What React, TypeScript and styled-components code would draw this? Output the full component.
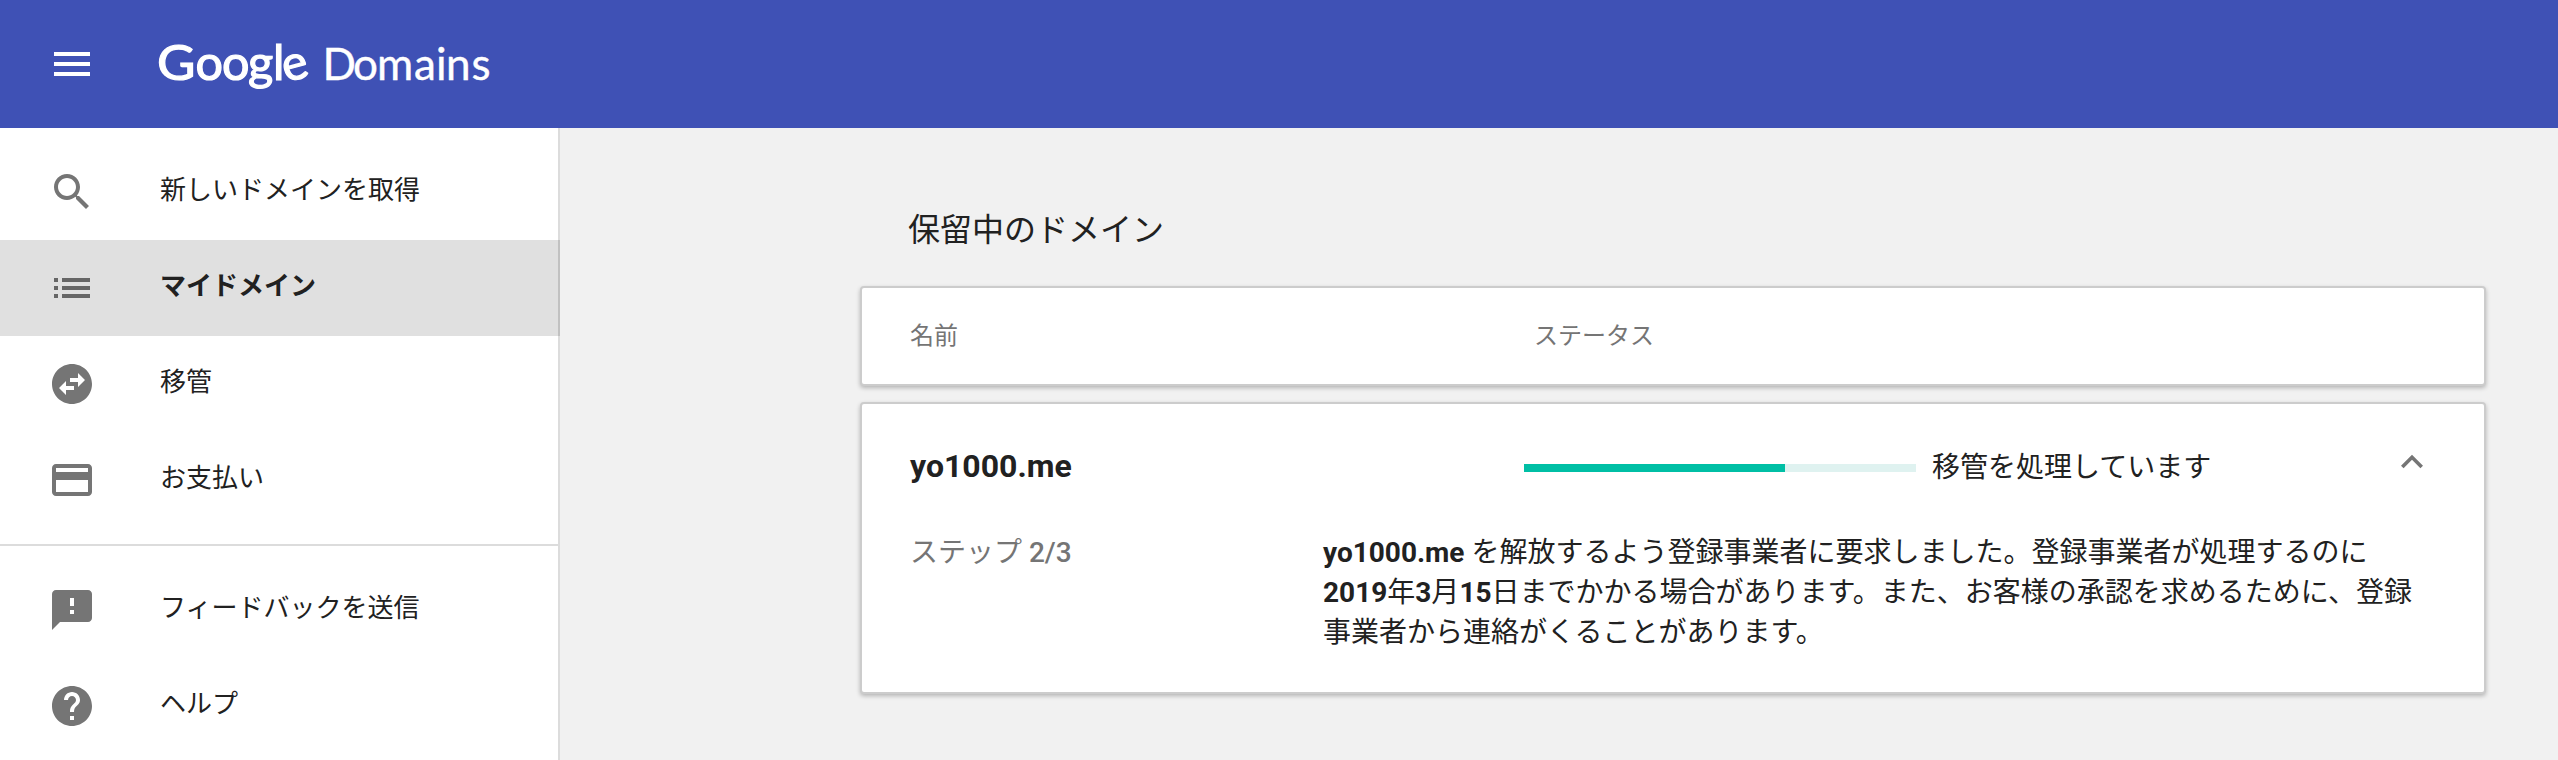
import React from 'react';
import styled, { createGlobalStyle } from 'styled-components';

const GlobalStyle = createGlobalStyle`
  * { box-sizing: border-box; }
  body {
    margin: 0;
    background: #f1f1f1;
    color: #212121;
    font-family: Roboto, 'Noto Sans CJK JP', sans-serif;
  }
`;

const Page = styled.div`
  display: flex;
  flex-direction: column;
  height: 760px;
  overflow: hidden;
`;

const Header = styled.header`
  display: flex;
  align-items: center;
  flex: none;
  height: 128px;
  padding-left: 48px;
  background: #3f51b5;
  color: #fff;
`;

const Logo = styled.svg`
  display: block;
  width: 340px;
  height: 128px;
  margin-left: 60px;
  fill: #fff;
  font-family: Lato, sans-serif;
`;

const Body = styled.div`
  display: flex;
  flex: 1;
  min-height: 0;
`;

const Sidebar = styled.nav`
  flex: none;
  width: 560px;
  padding-top: 16px;
  background: linear-gradient(#dcdcdc, #dcdcdc) right / 2px 100% no-repeat #fff;
`;

const NavItem = styled.a<{ $active?: boolean }>`
  display: flex;
  align-items: center;
  height: 96px;
  padding-left: 48px;
  border-right: 2px solid ${(p) => (p.$active ? '#c1c1c1' : 'transparent')};
  background: ${(p) => (p.$active ? '#e0e0e0' : 'transparent')};
  background-clip: padding-box;
  color: ${(p) => (p.$active ? '#666' : '#757575')};
  font-weight: ${(p) => (p.$active ? 700 : 400)};
`;

const NavLabel = styled.span`
  margin: 0 0 4px 64px;
  color: #212121;
  font-size: 26px;
  line-height: 40px;
`;

const Divider = styled.hr`
  width: 558px;
  height: 2px;
  margin: 16px 0;
  border: 0;
  background: #dcdcdc;
`;

const Icon = styled.svg<{ $size: number }>`
  flex: none;
  display: block;
  width: ${(p) => p.$size}px;
  height: ${(p) => p.$size}px;
  fill: currentColor;
`;

const Main = styled.main`
  flex: 1;
  padding: 78px 72px 0 300px;
`;

const Title = styled.h1`
  margin: 0 0 32px 48px;
  font-size: 32px;
  font-weight: 400;
  line-height: 48px;
`;

const Card = styled.section`
  margin-bottom: 16px;
  border: 2px solid #ccc;
  border-radius: 4px;
  background: #fff;
  box-shadow: 0 2px 4px rgba(0, 0, 0, 0.25);
`;

const TableHead = styled(Card)`
  display: flex;
  height: 100px;
  padding: 28px 0 0 48px;
  color: #757575;
  font-size: 24px;
  line-height: 40px;
`;

const HeadCell = styled.span<{ $width?: number }>`
  width: ${(p) => (p.$width ? `${p.$width}px` : 'auto')};
`;

const DomainCard = styled(Card)`
  height: 292px;
  padding: 38px 48px 0;
`;

const Summary = styled.div`
  display: flex;
  align-items: center;
  height: 48px;
`;

const DomainName = styled.h2`
  width: 614px;
  margin: 0;
  font-size: 32px;
  font-weight: 700;
  line-height: 48px;
`;

const Track = styled.div`
  width: 392px;
  height: 8px;
  margin-top: 4px;
  background: #dff2f0;
`;

const Fill = styled.div`
  height: 100%;
  background: #00bfa5;
`;

const StatusText = styled.span`
  margin: 4px 0 0 16px;
  font-size: 28px;
  line-height: 40px;
`;

const Toggle = styled.button`
  margin: 0 2px 8px auto;
  padding: 0;
  border: 0;
  background: none;
  color: #757575;
`;

const Details = styled.div`
  display: flex;
  margin-top: 43px;
  font-size: 28px;
  line-height: 40px;
`;

const Step = styled.div`
  width: 413px;
  color: #757575;
  b { font-weight: 500; }
`;

const Message = styled.p`
  margin: 0;
  white-space: nowrap;
  b { font-weight: 700; }
`;

const paths = {
  menu: 'M3 18h18v-2H3v2zm0-5h18v-2H3v2zm0-7v2h18V6H3z',
  search:
    'M15.5 14h-.79l-.28-.27C15.41 12.59 16 11.11 16 9.5 16 5.91 13.09 3 9.5 3S3 5.91 3 9.5 5.91 16 9.5 16c1.61 0 3.09-.59 4.23-1.57l.27.28v.79l5 4.99L20.49 19l-4.99-5zm-6 0C7.01 14 5 11.99 5 9.5S7.01 5 9.5 5 14 7.01 14 9.5 11.99 14 9.5 14z',
  list: 'M3 13h2v-2H3v2zm0 4h2v-2H3v2zm0-8h2V7H3v2zm4 4h14v-2H7v2zm0 4h14v-2H7v2zM7 7v2h14V7H7z',
  swap: 'M22 12c0-5.52-4.48-10-10-10S2 6.48 2 12s4.48 10 10 10 10-4.48 10-10zm-7-5.5l3.5 3.5-3.5 3.5V11h-4V9h4V6.5zm-6 11L5.5 14 9 10.5V13h4v2H9v2.5z',
  card: 'M20 4H4c-1.11 0-1.99.89-1.99 2L2 18c0 1.11.89 2 2 2h16c1.11 0 2-.89 2-2V6c0-1.11-.89-2-2-2zm0 14H4v-6h16v6zm0-10H4V6h16v2z',
  feedback:
    'M20 2H4c-1.1 0-1.99.9-1.99 2L2 22l4-4h14c1.1 0 2-.9 2-2V4c0-1.1-.9-2-2-2zm-7 12h-2v-2h2v2zm0-4h-2V6h2v4z',
  help: 'M12 2C6.48 2 2 6.48 2 12s4.48 10 10 10 10-4.48 10-10S17.52 2 12 2zm1 17h-2v-2h2v2zm2.07-7.75l-.9.92C13.45 12.9 13 13.5 13 15h-2v-.5c0-1.1.45-2.1 1.17-2.83l1.24-1.26c.37-.36.59-.86.59-1.41 0-1.1-.9-2-2-2s-2 .9-2 2H8c0-2.21 1.79-4 4-4s4 1.79 4 4c0 .88-.36 1.68-.93 2.25z',
  collapse: 'M12 8l-6 6 1.41 1.41L12 10.83l4.59 4.58L18 14z',
};

type IconName = keyof typeof paths;

const Glyph = ({ name, size = 48 }: { name: IconName; size?: number }) => (
  <Icon $size={size} viewBox="0 0 24 24" aria-hidden="true">
    <path d={paths[name]} />
  </Icon>
);

type Item = { icon: IconName; label: string; active?: boolean };

const primary: Item[] = [
  { icon: 'search', label: '新しいドメインを取得' },
  { icon: 'list', label: 'マイドメイン', active: true },
  { icon: 'swap', label: '移管' },
  { icon: 'card', label: 'お支払い' },
];

const secondary: Item[] = [
  { icon: 'feedback', label: 'フィードバックを送信' },
  { icon: 'help', label: 'ヘルプ' },
];

const NavList = ({ items }: { items: Item[] }) => (
  <>
    {items.map(({ icon, label, active }) => (
      <NavItem key={label} $active={active}>
        <Glyph name={icon} />
        <NavLabel>{label}</NavLabel>
      </NavItem>
    ))}
  </>
);

export default function App() {
  return (
    <Page lang="ja">
      <GlobalStyle />
      <Header>
        <Glyph name="menu" />
        <Logo viewBox="0 0 340 128" role="img" aria-label="Google Domains">
          <text y="79.5" fontSize="48.5" stroke="#fff" strokeWidth="1.2">
            <tspan x="1" textLength="38.5" lengthAdjust="spacingAndGlyphs">G</tspan>
            <tspan x="39.5 66 92 117 130" y="79.5 79.5 79.5 79.5 82.5" rotate="0 0 0 0 -15">oogle</tspan>
          </text>
          <text x="166.5 197 221 258 280 290 315.5" y="80" fontSize="44" stroke="#fff" strokeWidth="0.4">Domains</text>
        </Logo>
      </Header>
      <Body>
        <Sidebar>
          <NavList items={primary} />
          <Divider />
          <NavList items={secondary} />
        </Sidebar>
        <Main>
          <Title>保留中のドメイン</Title>
          <TableHead>
            <HeadCell $width={624}>名前</HeadCell>
            <HeadCell>ステータス</HeadCell>
          </TableHead>
          <DomainCard>
            <Summary>
              <DomainName>yo1000.me</DomainName>
              <Track>
                <Fill style={{ width: `${(2 / 3) * 100}%` }} />
              </Track>
              <StatusText>移管を処理しています</StatusText>
              <Toggle aria-label="閉じる">
                <Glyph name="collapse" size={44} />
              </Toggle>
            </Summary>
            <Details>
              <Step>ステップ <b>2/3</b></Step>
              <Message>
                <b>yo1000.me</b> を解放するよう登録事業者に要求しました。登録事業者が処理するのに
                <br />
                <b>2019</b>年<b>3</b>月<b>15</b>日までかかる場合があります。また、お客様の承認を求めるために、登録
                <br />
                事業者から連絡がくることがあります。
              </Message>
            </Details>
          </DomainCard>
        </Main>
      </Body>
    </Page>
  );
}
